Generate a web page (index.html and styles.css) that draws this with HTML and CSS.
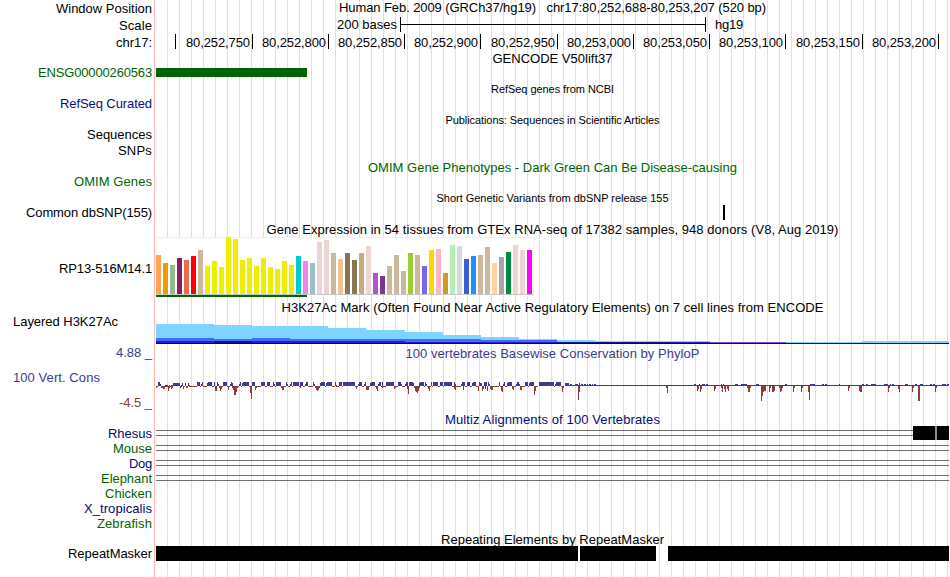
FILE: index.html
```html
<!DOCTYPE html>
<html lang="en">
<head>
<meta charset="utf-8">
<title>Genome Browser</title>
<link rel="stylesheet" href="styles.css">
</head>
<body>
<main class="browser">
  <div class="labels">
    <span data-w="96">Window Position</span>
    <span data-w="33">Scale</span>
    <span data-w="36">chr17:</span>
    <span class="green" data-w="114">ENSG00000260563</span>
    <span class="blue" data-w="92">RefSeq Curated</span>
    <span data-w="65">Sequences</span>
    <span data-w="34">SNPs</span>
    <span class="green" data-w="78">OMIM Genes</span>
    <span data-w="126">Common dbSNP(155)</span>
    <span data-w="93">RP13-516M14.1</span>
    <span class="left" data-w="105">Layered H3K27Ac</span>
    <span class="indigo" data-w="36">4.88 _</span>
    <span class="left indigo" data-w="87">100 Vert. Cons</span>
    <span class="brown" data-w="33">-4.5 _</span>
    <span class="navy" data-w="44">Rhesus</span>
    <span class="green" data-w="39">Mouse</span>
    <span class="navy" data-w="23">Dog</span>
    <span class="green" data-w="51">Elephant</span>
    <span class="green" data-w="47">Chicken</span>
    <span class="navy" data-w="68">X_tropicalis</span>
    <span class="green" data-w="55">Zebrafish</span>
    <span data-w="84">RepeatMasker</span>
  </div>

  <div class="tracks">
    <header class="position"><span data-w="427">Human Feb. 2009 (GRCh37/hg19)&nbsp;&nbsp; chr17:80,252,688-80,253,207 (520 bp)</span></header>
    <div class="scale">
      <span data-w="60">200 bases</span>
      <i class="scale-bar"></i>
      <span data-w="28">hg19</span>
    </div>
    <div class="ruler">
      <span class="first"></span>
      <span class="wide"><b data-w="64">80,252,750</b></span>
      <span><b data-w="64">80,252,800</b></span>
      <span><b data-w="64">80,252,850</b></span>
      <span><b data-w="64">80,252,900</b></span>
      <span class="wide"><b data-w="64">80,252,950</b></span>
      <span><b data-w="64">80,253,000</b></span>
      <span><b data-w="64">80,253,050</b></span>
      <span><b data-w="64">80,253,100</b></span>
      <span class="wide"><b data-w="64">80,253,150</b></span>
      <span><b data-w="64">80,253,200</b></span>
    </div>

    <section class="gencode">
      <h2><span data-w="120">GENCODE V50lift37</span></h2>
      <div class="gene"></div>
    </section>
    <section class="refseq"><h2 class="small"><span data-w="123">RefSeq genes from NCBI</span></h2></section>
    <section class="pubs"><h2 class="small"><span data-w="214">Publications: Sequences in Scientific Articles</span></h2></section>
    <section class="omim"><h2 class="green"><span data-w="369">OMIM Gene Phenotypes - Dark Green Can Be Disease-causing</span></h2></section>
    <section class="dbsnp">
      <h2 class="small"><span data-w="232">Short Genetic Variants from dbSNP release 155</span></h2>
      <div class="variant"></div>
    </section>
    <section class="gtex">
      <h2><span data-w="572">Gene Expression in 54 tissues from GTEx RNA-seq of 17382 samples, 948 donors (V8, Aug 2019)</span></h2>
      <svg id="gtex" width="793" height="60" viewBox="156 237 793 60" shape-rendering="crispEdges"></svg>
    </section>
    <section class="h3k">
      <h2><span data-w="542">H3K27Ac Mark (Often Found Near Active Regulatory Elements) on 7 cell lines from ENCODE</span></h2>
      <svg id="h3k" width="793" height="29" viewBox="156 315 793 29" shape-rendering="crispEdges"></svg>
    </section>
    <section class="phylop">
      <h2 class="indigo"><span data-w="294">100 vertebrates Basewise Conservation by PhyloP</span></h2>
      <svg id="phylop" width="793" height="50" viewBox="156 361 793 50" shape-rendering="crispEdges"></svg>
    </section>
    <section class="multiz">
      <h2 class="navy"><span data-w="215">Multiz Alignments of 100 Vertebrates</span></h2>
      <svg width="793" height="60" viewBox="156 427 793 60" shape-rendering="crispEdges">
        <path fill="#707070" d="M156 430h793v1H156zM156 435h793v1H156zM156 445h793v1H156zM156 450h793v1H156zM156 460h793v1H156zM156 465h793v1H156zM156 475h793v1H156zM156 480h793v1H156z"/>
        <path d="M913 426h36v14h-36z"/>
        <path fill="#8c8c8c" d="M935 426h2v14h-2z"/>
      </svg>
    </section>
    <section class="repeats">
      <h2><span data-w="223">Repeating Elements by RepeatMasker</span></h2>
      <div class="masks"><i class="r1"></i><i class="r2"></i><i class="r3"></i></div>
    </section>
  </div>
</main>
<script src="tracks.js"></script>
</body>
</html>
```
FILE: styles.css
```css
body {
  margin: 0;
  background: #fff;
  color: #000;
  font: 13px/15px "Liberation Sans", Arial, sans-serif;
  overflow: hidden;
}

.browser {
  display: flex;
  width: 949px;
  height: 577px;
}

.labels {
  box-sizing: border-box;
  width: 154px;
  padding: 1px 2px 0 13px;
  display: grid;
  grid-template-rows: 17px 17px 30px 31px 31px 16px 31px 31px 56px 53px 31px 25px 25px 31px repeat(6, 15px) 30px 15px;
  justify-items: end;
  align-items: start;
}

span, b { white-space: nowrap; }

.labels .left { justify-self: start; }

.green { color: #006400; }
.blue { color: #0c0c78; }
.navy { color: #000c78; }
.indigo { color: #3c3c8c; }
.brown { color: #8c3c3c; }

.tracks {
  box-sizing: border-box;
  width: 795px;
  padding-left: 1px;
  border-left: 1px solid #ffb4b4;
  background: repeating-linear-gradient(90deg, transparent 0 11px, #dcdcff 11px 12px) content-box;
}

h2 {
  margin: 0;
  height: 15px;
  font-size: 13px;
  font-weight: 400;
  line-height: 15px;
  text-align: center;
}

h2.small {
  height: 13px;
  font-size: 11px;
  line-height: 13px;
}

svg { display: block; overflow: visible; }

.position { height: 17px; text-align: center; }

.scale {
  display: flex;
  height: 17px;
  padding-left: 181px;
}

.scale-bar {
  box-sizing: border-box;
  width: 306px;
  height: 15px;
  margin: 0 9px 0 3px;
  border: solid #000;
  border-width: 0 1px;
  background: linear-gradient(#000, #000) 0 7px / 100% 1px no-repeat;
}

.ruler {
  display: flex;
  height: 17px;
}

.ruler span {
  box-sizing: border-box;
  width: 76px;
  height: 15px;
  padding: 1px 2px 0 0;
  border-right: 1px solid #000;
  text-align: right;
}

.ruler .first { width: 20px; }
.ruler .wide { width: 77px; }
.ruler b { font-weight: 400; }

.gencode { height: 32px; }
.gene {
  width: 151px;
  height: 9px;
  margin-top: 2px;
  background: #006400;
}

.refseq { height: 31px; }
.pubs { height: 46px; }
.omim { height: 32px; }
.dbsnp { height: 30px; }
.variant {
  width: 2px;
  height: 15px;
  margin-left: 567px;
  background: #000;
}
.gtex { height: 78px; }
.h3k { height: 46px; }
.phylop { height: 66px; }
.multiz { height: 120px; }

.repeats h2 { height: 14px; }
.masks { display: flex; height: 15px; }
.masks i { background: #000; }
.r1 { width: 422px; }
.r2 { width: 76px; margin: 0 12px 0 2px; }
.r3 { width: 281px; }
```
FILE: tracks.js
```js
// Spread each label over its nominal width.
document.querySelectorAll('[data-w]').forEach(function (el) {
  const natural = el.getBoundingClientRect().width;
  el.style.letterSpacing = (Number(el.dataset.w) - natural) / el.textContent.length + 'px';
});

function draw(id, rects) {
  const svg = document.getElementById(id);
  for (const [x, y, w, h, fill] of rects) {
    const r = document.createElementNS('http://www.w3.org/2000/svg', 'rect');
    r.setAttribute('x', x);
    r.setAttribute('y', y);
    r.setAttribute('width', w);
    r.setAttribute('height', h);
    r.setAttribute('fill', fill);
    svg.appendChild(r);
  }
}

// GTEx: one bar per tissue.
const tan = '#cdb79e', pink = '#eed5d2', brown = '#8b7355', yellow = '#eeee00';
const heights = [39,31,29,36,34,38,44,28,33,27,57,55,34,36,28,36,27,25,33,29,38,33,31,52,54,41,35,
  41,34,41,48,21,18,28,39,23,41,39,28,44,45,21,49,48,35,38,39,47,31,37,42,49,44,44];
const colors = ['#ffa54f','#ee9a00','#8fbc8f','#8b1c62','#ee6a50','#ff0000',tan,
  yellow,yellow,yellow,yellow,yellow,yellow,yellow,yellow,yellow,yellow,yellow,yellow,yellow,
  '#00cdcd','#ee82ee','#9ac0cd',pink,pink,tan,'#eec591',brown,brown,
  '#cdaa7d',pink,'#b452cd','#7a378b',tan,tan,tan,'#9acd32',tan,'#7a67ee','#ffd700','#ffb6c1',
  '#cd9b1d','#b4eeb4','#d9d9d9','#3a5fcd','#1e90ff',tan,tan,'#ffd39b','#a6a6a6','#008b45',
  pink,pink,'#ff00ff'];
const gtex = [
  [156, 237, 378, 58, '#f0f0f0'],
  [157, 238, 376, 56, '#ffffff'],
  [156, 294, 378, 1, '#c8c8c8'],
  [156, 295, 151, 2, '#006400']
];
for (let i = 0; i < heights.length; i++) {
  gtex.push([156 + 7 * i, 294 - heights[i], 5, heights[i], colors[i]]);
}
draw('gtex', gtex);

// H3K27Ac: overlaid step levels, as start, end, top, colour.
const sky = '#7fd4ff', azure = '#3f6cff', deep = '#2c18d0', dark = '#181490';
const levels = [
  [156,214,324,sky],[214,252,325,sky],[252,328,326,sky],[328,366,328,sky],[366,405,330,sky],
  [405,443,332,sky],[443,481,335,sky],[481,519,337,sky],[519,557,339,sky],[557,595,340,sky],
  [595,710,341,sky],[786,862,342,sky],[862,949,341,sky],
  [156,214,338,azure],[214,252,339,azure],[252,290,338,azure],[290,481,339,azure],
  [481,557,340,azure],[557,595,342,azure],
  [156,214,341,deep],[252,405,341,deep],[405,557,342,deep],[671,710,342,deep],
  [214,252,341,dark],[557,671,342,dark],[710,786,342,'#7850d0']
];
const marks = [];
for (const [a, b, y, fill] of levels) {
  marks.push([a, y, b - a, 343 - y, fill]);
}
marks.push([156, 343, 793, 1, '#100838']);
draw('h3k', marks);

// PhyloP: start and end in thirds of a pixel from each block start, then size.
const positive = {
  150: [[26,30,4],[30,33,2],[45,53,1],[57,60,1],[63,69,1],[69,90,3],[93,96,1],[96,99,3],[105,108,3],[114,117,3],
    [117,120,1],[141,150,4],[153,156,2],[156,159,4],[171,174,3],[174,186,4],[192,195,4],[201,204,4],[204,207,2],
    [219,231,4],[240,243,2],[243,246,4],[246,249,3],[267,270,2],[270,273,4],[276,279,3],[279,297,4],[306,315,4],
    [333,345,4],[351,360,4],[369,372,4],[372,375,2],[378,393,4],[408,411,4],[411,414,2],[420,423,2],[423,426,4],
    [429,447,4],[450,459,4],[465,468,2],[468,474,4],[489,492,4],[492,495,2],[510,513,3],[513,525,4],[528,531,3],
    [531,546,4],[555,558,4],[558,561,1],[567,576,4],[579,600,4]],
  350: [[0,15,4],[24,27,2],[27,36,4],[42,45,2],[45,48,4],[60,63,3],[63,75,4],[84,87,2],[87,93,4],[96,99,4],
    [108,132,4],[144,153,4],[153,156,2],[165,168,2],[168,174,4],[177,189,4],[189,192,3],[207,210,3],[210,222,4],
    [225,228,4],[228,231,2],[243,246,4],[249,264,4],[270,279,4],[282,306,4],[312,315,4],[315,318,2],[333,336,2],
    [336,345,4],[351,360,4],[366,369,3],[369,378,4],[387,390,4],[390,396,3],[402,411,4],[414,417,4],[417,420,2],
    [447,450,4],[459,462,2],[462,465,4],[471,474,3],[474,486,4],[498,501,2],[501,507,4],[507,510,2],[525,534,4],
    [537,540,3],[540,552,4],[567,600,4]],
  550: [[0,12,4],[15,18,2],[18,33,4],[45,57,3],[60,66,2],[75,84,2],[87,90,3],[93,99,2],[102,108,2],[111,114,2],
    [117,123,2],[126,129,2],[132,138,2],[432,438,2],[447,450,2],[456,465,2],[468,474,2],[513,516,2],[519,522,2],
    [555,564,2],[573,585,2],[585,591,2]],
  750: [[18,27,2],[105,111,2],[180,195,2],[216,222,2],[225,231,2],[267,270,2],[336,342,2],[348,354,2],[363,378,2],
    [402,414,2],[420,423,2],[426,432,2],[465,474,2],[495,501,2],[510,519,2],[540,546,2],[549,555,2],[576,588,2],[591,597,2]]
};
const negative = {
  150: [[18,21,2],[33,45,2],[39,45,3],[54,57,5],[57,60,2],[63,66,3],[66,69,2],[90,93,2],[99,102,3],[108,114,2],
    [195,201,5],[207,210,2],[210,213,5],[213,216,3],[234,237,4],[246,264,2],[249,261,4],[252,258,9],[258,261,6],
    [300,306,7],[303,306,13],[315,318,4],[318,321,2],[393,402,2],[396,402,4],[399,402,4],[450,453,2],[495,510,2],
    [498,507,4],[501,504,5]],
  350: [[18,21,3],[48,57,4],[78,84,3],[81,84,5],[96,99,2],[132,138,2],[132,135,3],[171,177,3],[174,177,8],
    [192,210,2],[195,207,5],[198,204,6],[201,204,7],[234,240,3],[237,240,5],[312,318,3],[315,318,4],[339,342,4],
    [384,387,5],[396,402,3],[396,399,5],[405,408,3],[411,414,5],[420,429,3],[423,429,4],[453,459,5],[456,459,6],
    [486,492,3],[489,492,4],[510,516,4],[552,558,5],[552,555,9]],
  550: [[12,15,1],[33,42,1],[36,39,6],[39,42,2],[84,90,6],[84,87,14],[348,354,2],[351,354,7],[441,447,3],
    [441,444,5],[450,456,3],[450,453,6],[492,498,3],[492,495,5],[513,519,2],[516,519,6],[522,528,3],[525,528,6],
    [531,537,3],[534,537,5],[591,600,2],[594,600,6]],
  750: [[0,3,2],[33,48,5],[33,42,6],[33,39,10],[33,36,15],[57,63,2],[57,60,6],[66,75,5],[66,72,6],[87,99,2],
    [90,96,5],[90,93,6],[129,135,2],[129,132,6],[153,159,2],[153,156,6],[174,180,6],[177,180,14],[294,300,2],
    [294,297,5],[327,336,5],[330,336,6],[414,420,2],[414,417,6],[444,450,3],[447,450,6],[486,492,2],[486,489,6],
    [504,510,15],[555,561,2],[555,558,6]]
};
const scores = [
  [156, 386, 382, 1, '#8c3c3c'],
  [565, 385, 384, 1, '#3c3c8c']
];
function addScores(set, up) {
  for (const base of Object.keys(set)) {
    for (const [a, b, n] of set[base]) {
      const x0 = Number(base) + Math.floor(a / 3);
      const x1 = Math.min(949, Number(base) + Math.ceil(b / 3));
      scores.push([x0, up ? 386 - n : 386, x1 - x0, n, up ? '#3c3c8c' : '#8c3c3c']);
      if (up && n > 1 && x0 < 565) {
        scores.push([x0, 386, x1 - x0, 1, '#ffffff']);
      }
    }
  }
}
addScores(positive, true);
addScores(negative, false);
draw('phylop', scores);
```
